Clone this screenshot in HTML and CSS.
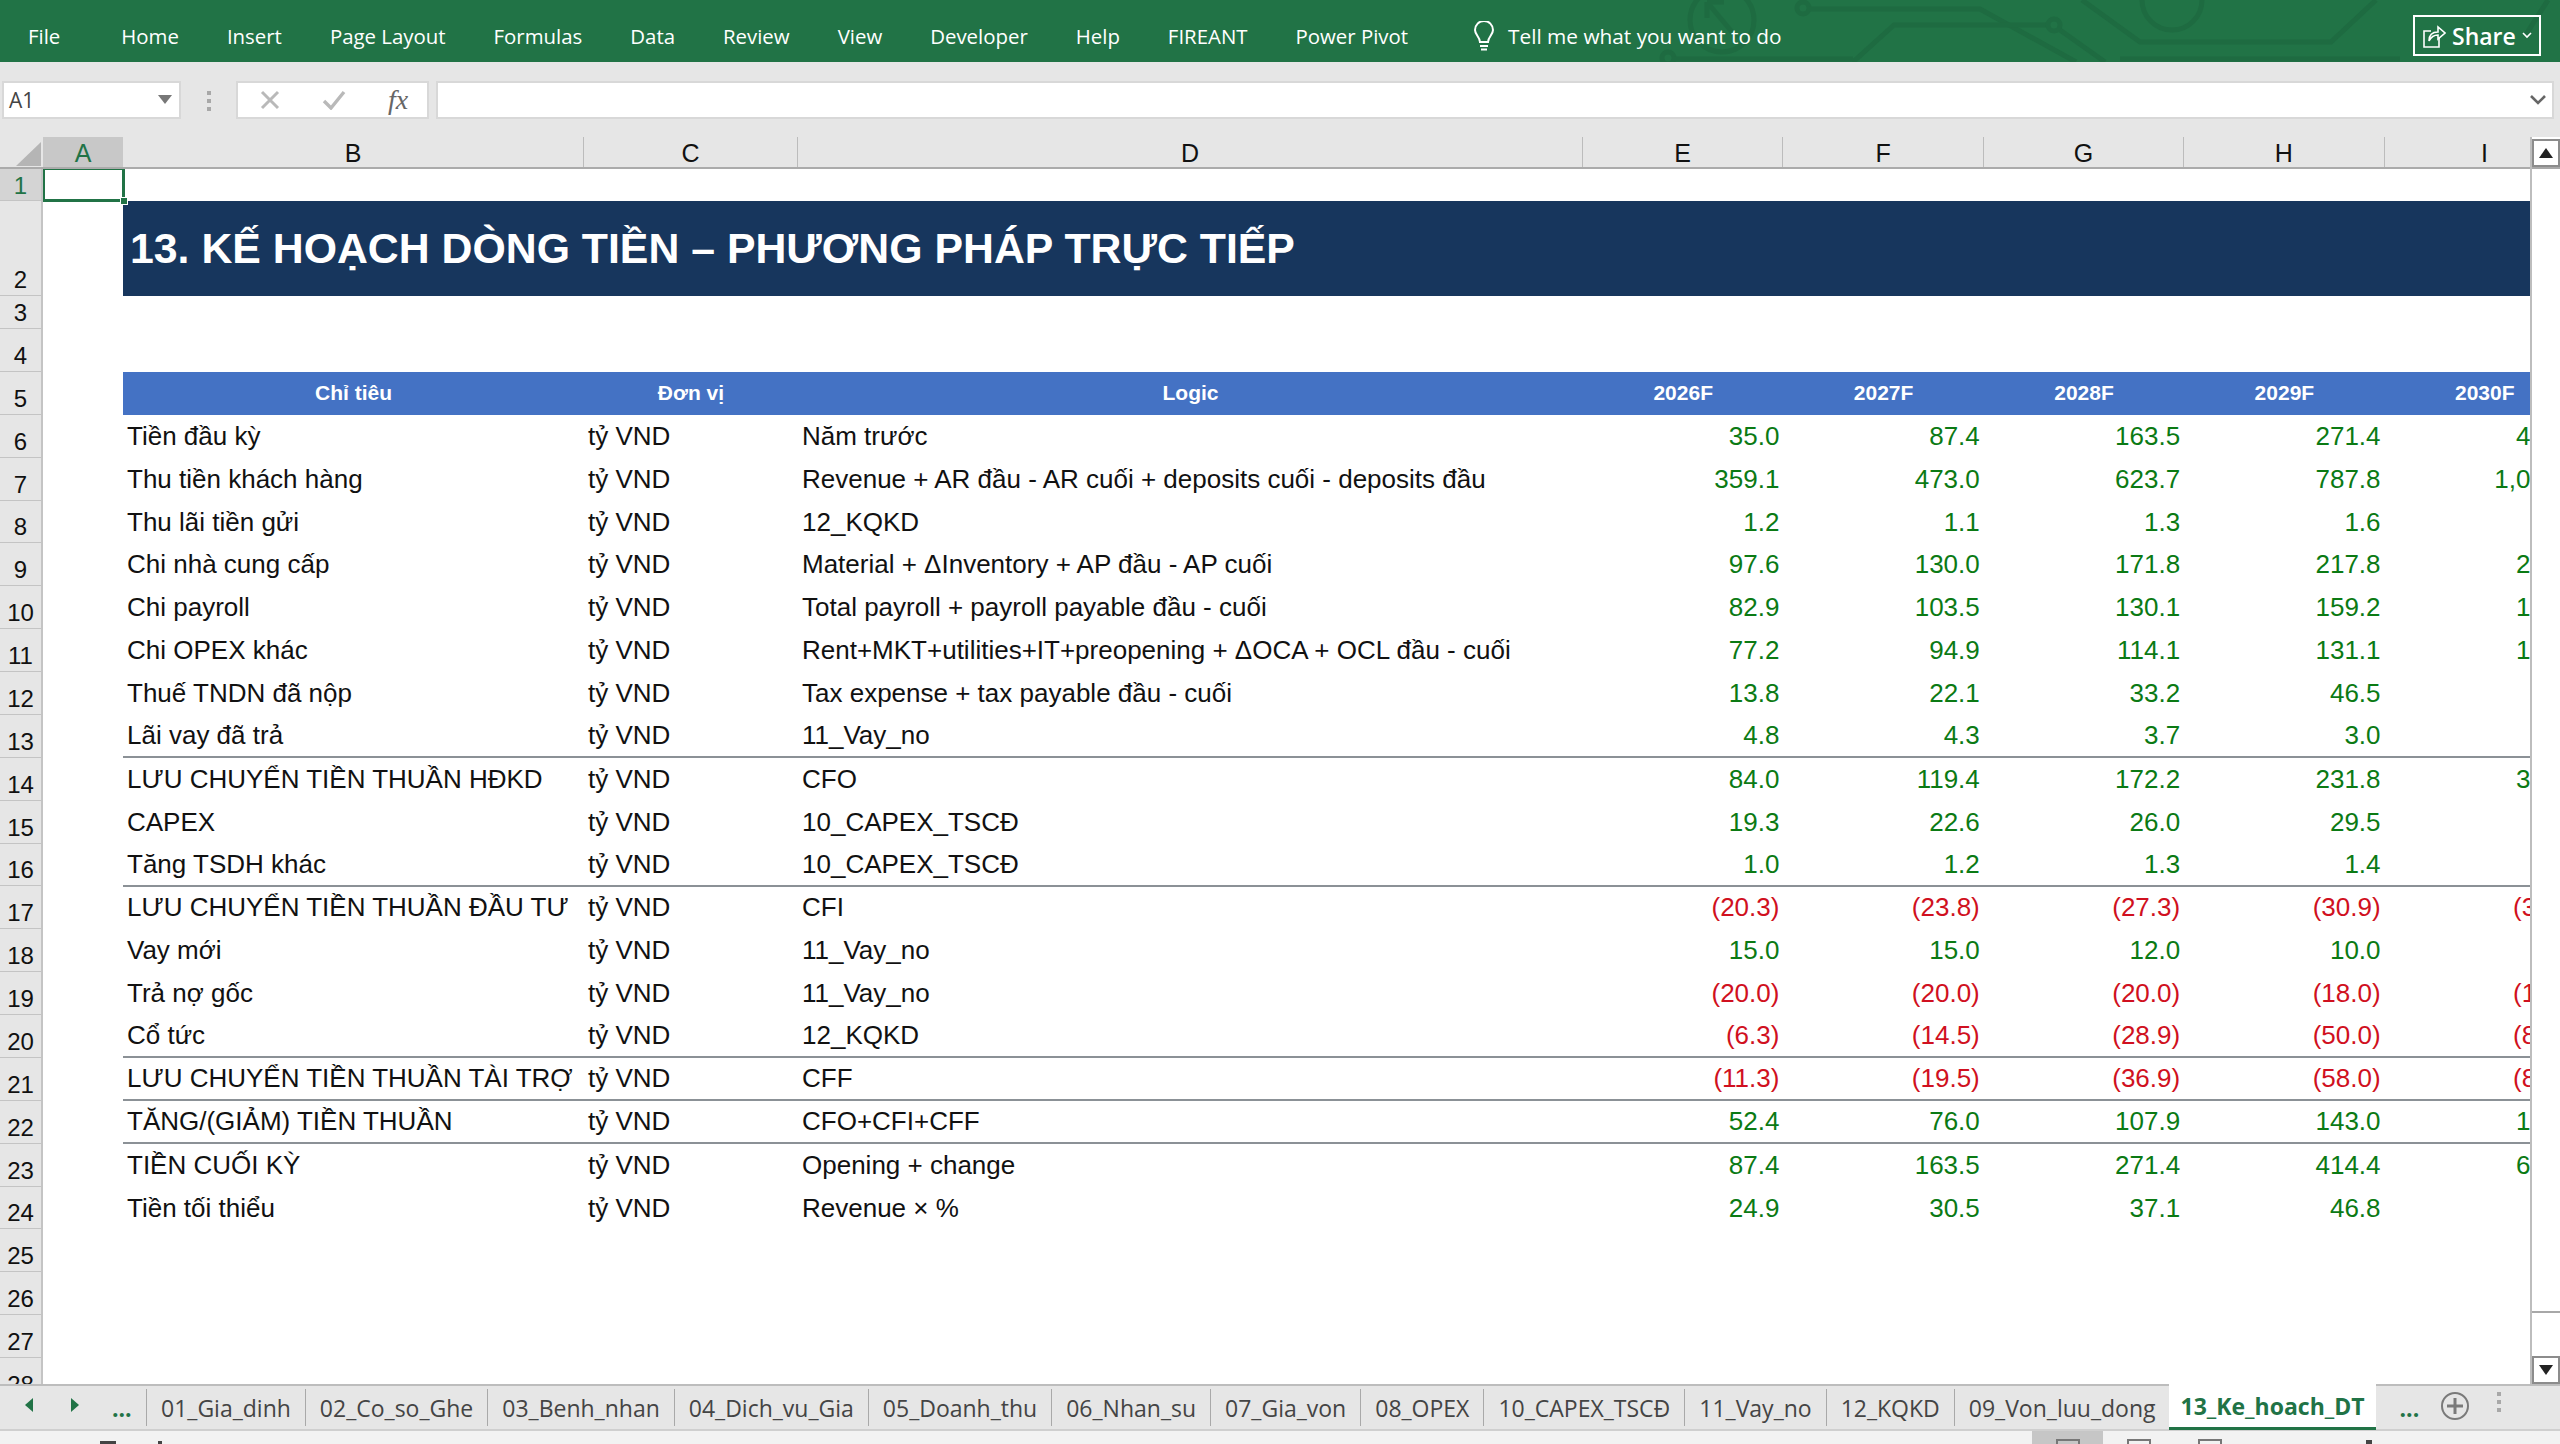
FILE: index.html
```html
<!DOCTYPE html>
<html lang="vi">

<head>
  <meta charset="UTF-8">
  <title>13_Ke_hoach_DT</title>
  <link rel="stylesheet" href="styles.css">
</head>

<body>

  <!-- ribbon -->
  <div class="ribbon">
    <svg class="circuit" width="2560" height="62" viewBox="0 0 2560 62" fill="none">
      <circle cx="1722" cy="20" r="32" />
      <path d="M1707 2 L1737 38 M1707 2 L1707 18 M1707 2 L1724 2" />
      <circle cx="1803" cy="8" r="6" />
      <path d="M1809 9 H1980 L2076 62" />
      <path d="M1853 62 L1894 25 H2048" />
      <circle cx="2054" cy="25" r="6" />
      <path d="M2060 30 L2105 62" />
      <circle cx="1668" cy="58" r="6" />
      <path d="M1674 59 H1853" />
      <path d="M2082 0 L2140 42 H2331 L2376 0" />
      <circle cx="2172" cy="0" r="30" />
      <path d="M2120 59 H2400" />
      <path d="M2548 0 L2525 36" />
    </svg>
    <span class="menu first">File</span>
    <span class="menu home">Home</span>
    <span class="menu">Insert</span>
    <span class="menu">Page Layout</span>
    <span class="menu">Formulas</span>
    <span class="menu">Data</span>
    <span class="menu">Review</span>
    <span class="menu">View</span>
    <span class="menu">Developer</span>
    <span class="menu">Help</span>
    <span class="menu">FIREANT</span>
    <span class="menu">Power Pivot</span>
    <svg class="bulb" width="24" height="30" viewBox="0 0 24 30" fill="none" stroke="#fff" stroke-width="2">
      <path d="M8 21 C8 16 3 14 3 9 A9 9 0 0 1 21 9 C21 14 16 16 16 21 Z" />
      <path d="M8 25 H16 M9 28.5 H15" />
    </svg>
    <span class="tell">Tell me what you want to do</span>
    <div class="share">
      <svg width="24" height="26" viewBox="0 0 24 26" fill="none" stroke="#fff" stroke-width="1.6">
        <path d="M9 8 H2 V24 H17 V15" />
        <path d="M7 18 C7 11 11 9 16 9 V4 L23 10 L16 16 V12 C12 12 9 14 7 18 Z" />
      </svg>
      <span class="share-text">Share</span>
      <svg width="10" height="7" viewBox="0 0 10 7" fill="none" stroke="#fff" stroke-width="1.6"><path d="M1 1 L5 5 L9 1" /></svg>
    </div>
  </div>

  <!-- name box + formula bar -->
  <div class="formula-bar">
    <div class="name-box">
      <span>A1</span>
      <i class="caret"></i>
    </div>
    <div class="grip"><b></b><b></b><b></b></div>
    <div class="fx-box">
      <svg width="20" height="20" viewBox="0 0 20 20" fill="none" stroke="#b9b9b9" stroke-width="3"><path d="M2 2 L18 18 M18 2 L2 18" /></svg>
      <svg width="24" height="20" viewBox="0 0 24 20" fill="none" stroke="#b9b9b9" stroke-width="3.4"><path d="M2 11 L9 18 L22 2" /></svg>
      <span class="fx">fx</span>
    </div>
    <div class="formula-input">
      <svg width="16" height="10" viewBox="0 0 16 10" fill="none" stroke="#666" stroke-width="2.6"><path d="M1 1 L8 8 L15 1" /></svg>
    </div>
  </div>

  <div class="workspace">
    <div class="sheet">

      <!-- column letters -->
      <div class="col-heads">
        <div class="corner"><i></i></div>
        <div class="col-head a">A</div>
        <div class="col-head b">B</div>
        <div class="col-head c">C</div>
        <div class="col-head d">D</div>
        <div class="col-head y">E</div>
        <div class="col-head y">F</div>
        <div class="col-head y">G</div>
        <div class="col-head y">H</div>
        <div class="col-head i">I</div>
      </div>

      <div class="sheet-body">
        <div class="row-heads">
          <div class="rh r1 on">1</div>
          <div class="rh r2">2</div>
          <div class="rh r3">3</div>
          <div class="rh">4</div>
          <div class="rh">5</div>
          <div class="rh">6</div>
          <div class="rh">7</div>
          <div class="rh">8</div>
          <div class="rh">9</div>
          <div class="rh">10</div>
          <div class="rh">11</div>
          <div class="rh">12</div>
          <div class="rh">13</div>
          <div class="rh">14</div>
          <div class="rh">15</div>
          <div class="rh">16</div>
          <div class="rh">17</div>
          <div class="rh">18</div>
          <div class="rh">19</div>
          <div class="rh">20</div>
          <div class="rh">21</div>
          <div class="rh">22</div>
          <div class="rh">23</div>
          <div class="rh">24</div>
          <div class="rh">25</div>
          <div class="rh">26</div>
          <div class="rh">27</div>
          <div class="rh">28</div>
        </div>

        <div class="cells">
          <div class="selection"><i></i></div>
          <div class="blank-1"></div>
          <div class="title">13. KẾ HOẠCH DÒNG TIỀN – PHƯƠNG PHÁP TRỰC TIẾP</div>
          <div class="blank-3"></div>
          <div class="blank-4"></div>

          <div class="row head">
            <div>Chỉ tiêu</div><div>Đơn vị</div><div>Logic</div>
            <div>2026F</div><div>2027F</div><div>2028F</div><div>2029F</div><div>2030F</div>
          </div>

          <div class="row"><div>Tiền đầu kỳ</div><div>tỷ VND</div><div>Năm trước</div><div class="n">35.0</div><div class="n">87.4</div><div class="n">163.5</div><div class="n">271.4</div><div class="n">414.4</div></div>
          <div class="row"><div>Thu tiền khách hàng</div><div>tỷ VND</div><div>Revenue + AR đầu - AR cuối + deposits cuối - deposits đầu</div><div class="n">359.1</div><div class="n">473.0</div><div class="n">623.7</div><div class="n">787.8</div><div class="n">1,012.5</div></div>
          <div class="row"><div>Thu lãi tiền gửi</div><div>tỷ VND</div><div>12_KQKD</div><div class="n">1.2</div><div class="n">1.1</div><div class="n">1.3</div><div class="n">1.6</div><div class="n">2.0</div></div>
          <div class="row"><div>Chi nhà cung cấp</div><div>tỷ VND</div><div>Material + ΔInventory + AP đầu - AP cuối</div><div class="n">97.6</div><div class="n">130.0</div><div class="n">171.8</div><div class="n">217.8</div><div class="n">280.4</div></div>
          <div class="row"><div>Chi payroll</div><div>tỷ VND</div><div>Total payroll + payroll payable đầu - cuối</div><div class="n">82.9</div><div class="n">103.5</div><div class="n">130.1</div><div class="n">159.2</div><div class="n">192.6</div></div>
          <div class="row"><div>Chi OPEX khác</div><div>tỷ VND</div><div>Rent+MKT+utilities+IT+preopening + ΔOCA + OCL đầu - cuối</div><div class="n">77.2</div><div class="n">94.9</div><div class="n">114.1</div><div class="n">131.1</div><div class="n">150.8</div></div>
          <div class="row"><div>Thuế TNDN đã nộp</div><div>tỷ VND</div><div>Tax expense + tax payable đầu - cuối</div><div class="n">13.8</div><div class="n">22.1</div><div class="n">33.2</div><div class="n">46.5</div><div class="n">63.2</div></div>
          <div class="row rule"><div>Lãi vay đã trả</div><div>tỷ VND</div><div>11_Vay_no</div><div class="n">4.8</div><div class="n">4.3</div><div class="n">3.7</div><div class="n">3.0</div><div class="n">2.3</div></div>
          <div class="row"><div>LƯU CHUYỂN TIỀN THUẦN HĐKD</div><div>tỷ VND</div><div>CFO</div><div class="n">84.0</div><div class="n">119.4</div><div class="n">172.2</div><div class="n">231.8</div><div class="n">325.6</div></div>
          <div class="row"><div>CAPEX</div><div>tỷ VND</div><div>10_CAPEX_TSCĐ</div><div class="n">19.3</div><div class="n">22.6</div><div class="n">26.0</div><div class="n">29.5</div><div class="n">33.4</div></div>
          <div class="row rule"><div>Tăng TSDH khác</div><div>tỷ VND</div><div>10_CAPEX_TSCĐ</div><div class="n">1.0</div><div class="n">1.2</div><div class="n">1.3</div><div class="n">1.4</div><div class="n">1.6</div></div>
          <div class="row"><div>LƯU CHUYỂN TIỀN THUẦN ĐẦU TƯ</div><div>tỷ VND</div><div>CFI</div><div class="n neg">(20.3)</div><div class="n neg">(23.8)</div><div class="n neg">(27.3)</div><div class="n neg">(30.9)</div><div class="n neg">(35.0)</div></div>
          <div class="row"><div>Vay mới</div><div>tỷ VND</div><div>11_Vay_no</div><div class="n">15.0</div><div class="n">15.0</div><div class="n">12.0</div><div class="n">10.0</div><div class="n">8.0</div></div>
          <div class="row"><div>Trả nợ gốc</div><div>tỷ VND</div><div>11_Vay_no</div><div class="n neg">(20.0)</div><div class="n neg">(20.0)</div><div class="n neg">(20.0)</div><div class="n neg">(18.0)</div><div class="n neg">(15.0)</div></div>
          <div class="row rule"><div>Cổ tức</div><div>tỷ VND</div><div>12_KQKD</div><div class="n neg">(6.3)</div><div class="n neg">(14.5)</div><div class="n neg">(28.9)</div><div class="n neg">(50.0)</div><div class="n neg">(80.0)</div></div>
          <div class="row rule"><div>LƯU CHUYỂN TIỀN THUẦN TÀI TRỢ</div><div>tỷ VND</div><div>CFF</div><div class="n neg">(11.3)</div><div class="n neg">(19.5)</div><div class="n neg">(36.9)</div><div class="n neg">(58.0)</div><div class="n neg">(87.0)</div></div>
          <div class="row rule"><div>TĂNG/(GIẢM) TIỀN THUẦN</div><div>tỷ VND</div><div>CFO+CFI+CFF</div><div class="n">52.4</div><div class="n">76.0</div><div class="n">107.9</div><div class="n">143.0</div><div class="n">193.6</div></div>
          <div class="row"><div>TIỀN CUỐI KỲ</div><div>tỷ VND</div><div>Opening + change</div><div class="n">87.4</div><div class="n">163.5</div><div class="n">271.4</div><div class="n">414.4</div><div class="n">608.0</div></div>
          <div class="row"><div>Tiền tối thiểu</div><div>tỷ VND</div><div>Revenue × %</div><div class="n">24.9</div><div class="n">30.5</div><div class="n">37.1</div><div class="n">46.8</div><div class="n">59.4</div></div>
        </div>
      </div>
    </div>

    <!-- vertical scrollbar -->
    <div class="scrollbar">
      <div class="sb-btn"><i class="up"></i></div>
      <div class="sb-thumb"></div>
      <div class="sb-btn"><i class="down"></i></div>
    </div>
  </div>

  <!-- sheet tabs -->
  <div class="tabs">
    <div class="tab-nav">
      <i class="arrow left"></i>
      <i class="arrow right"></i>
      <span class="more">...</span>
    </div>
    <div class="tab">01_Gia_dinh</div>
    <div class="tab">02_Co_so_Ghe</div>
    <div class="tab">03_Benh_nhan</div>
    <div class="tab">04_Dich_vu_Gia</div>
    <div class="tab">05_Doanh_thu</div>
    <div class="tab">06_Nhan_su</div>
    <div class="tab">07_Gia_von</div>
    <div class="tab">08_OPEX</div>
    <div class="tab">10_CAPEX_TSCĐ</div>
    <div class="tab">11_Vay_no</div>
    <div class="tab">12_KQKD</div>
    <div class="tab">09_Von_luu_dong</div>
    <div class="tab active">13_Ke_hoach_DT</div>
    <span class="more after">...</span>
    <svg class="add" width="30" height="30" viewBox="0 0 30 30" fill="none" stroke="#7a7a7a">
      <circle cx="15" cy="15" r="13" stroke-width="2" />
      <path d="M15 7 V23 M7 15 H23" stroke-width="3" />
    </svg>
    <div class="grip tab-grip"><b></b><b></b><b></b></div>
  </div>

  <!-- status bar, cut off by the bottom of the window -->
  <div class="status">
    <i class="st-icon macro"></i>
    <i class="st-icon rec"></i>
    <div class="views">
      <div class="view on"><i></i></div>
      <div class="view"><i></i></div>
      <div class="view"><i></i></div>
    </div>
    <i class="zoom-tick"></i>
  </div>

</body>

</html>
```

FILE: styles.css
```css
* {
  box-sizing: border-box;
}

html,
body {
  height: 100%;
}

body {
  margin: 0;
  height: 1444px;
  overflow: hidden;
  display: flex;
  flex-direction: column;
  background: #e6e6e6;
  font-family: "Liberation Sans", Arial, sans-serif;
  color: #111;
}

/* ribbon */
.ribbon {
  position: relative;
  height: 62px;
  flex: none;
  display: flex;
  align-items: center;
  gap: 48px;
  padding: 9px 0 0 28px;
  background: #217346;
  color: #fff;
  font-family: "Open Sans", "Noto Sans", sans-serif;
  font-size: 20.4px;
  overflow: hidden;
}

.circuit {
  position: absolute;
  top: 0;
  left: 0;
}

.circuit * {
  stroke: #1e6b41;
  stroke-width: 5;
}

.menu,
.tell,
.bulb {
  position: relative;
}

.tell {
  font-size: 20.8px;
}

.menu.home {
  margin-left: 13px;
}

.bulb {
  margin-left: 16px;
  margin-right: -36px;
}

.share {
  position: absolute;
  top: 15px;
  left: 2413px;
  width: 128px;
  height: 41px;
  display: flex;
  align-items: center;
  gap: 6px;
  padding-left: 7px;
  border: 2px solid #fff;
}

.share-text {
  font-size: 23px;
  font-weight: 600;
}

/* formula bar */
.formula-bar {
  height: 75px;
  flex: none;
  display: flex;
  align-items: flex-start;
  padding: 19px 6px 0 2px;
  background: #e6e6e6;
}

.name-box,
.fx-box,
.formula-input {
  height: 38px;
  display: flex;
  align-items: center;
  background: #fff;
  border: 2px solid #d8d8d8;
}

.name-box {
  width: 179px;
  justify-content: space-between;
  padding: 0 7px 0 5px;
  font-family: "Open Sans", "Noto Sans", sans-serif;
  font-size: 21px;
  color: #444;
}

.caret {
  width: 0;
  height: 0;
  margin-top: -2px;
  border-left: 7px solid transparent;
  border-right: 7px solid transparent;
  border-top: 9px solid #777;
}

.grip {
  width: 55px;
  display: flex;
  flex-direction: column;
  align-items: center;
  gap: 4px;
  padding-top: 10px;
}

.grip b {
  width: 4px;
  height: 4px;
  background: #a8a8a8;
}

.fx-box {
  width: 193px;
  gap: 42px;
  padding-left: 22px;
}

.fx {
  font-family: "Liberation Serif", serif;
  font-style: italic;
  font-size: 28px;
  color: #666;
}

.formula-input {
  flex: 1;
  margin-left: 7px;
  justify-content: flex-end;
  padding-right: 6px;
}

/* grid */
.workspace {
  flex: none;
  height: 1247px;
  display: flex;
  overflow: hidden;
}

.sheet {
  width: 2530px;
  flex: none;
  overflow: hidden;
}

.col-heads {
  width: 2800px;
  height: 32px;
  display: flex;
  align-items: stretch;
  border-bottom: 2px solid #ababab;
  font-size: 25px;
  line-height: 33px;
  text-align: center;
}

.corner {
  position: relative;
  width: 43px;
  flex: none;
}

.corner i {
  position: absolute;
  top: 5px;
  left: 16px;
  width: 25px;
  height: 24px;
  background: #b5b5b5;
  clip-path: polygon(100% 0, 100% 100%, 0 100%);
}

.col-head {
  flex: none;
  border-right: 1px solid #bcbcbc;
  color: #111;
}

.col-head.a {
  width: 80px;
  background: #c8c8c8;
  color: #217346;
  border-right: none;
}

.col-head.b {
  width: 461px;
}

.col-head.c {
  width: 214px;
}

.col-head.d {
  width: 785px;
}

.col-head.y {
  width: 200.4px;
}

.col-head.i {
  width: 200px;
  border-right: none;
}

.sheet-body {
  display: flex;
  height: 1215px;
}

.row-heads {
  width: 43px;
  flex: none;
  font-size: 24px;
  text-align: center;
  border-right: 2px solid #c4c4c4;
}

.rh {
  height: 42.88px;
  display: flex;
  align-items: flex-end;
  justify-content: center;
  padding-bottom: 1px;
  border-bottom: 1.5px solid #c4c4c4;
  color: #111;
}

.rh.r1 {
  height: 32px;
  background: #d4d4d4;
  color: #217346;
  padding-bottom: 0;
}

.rh.r2 {
  height: 95px;
}

.rh.r3 {
  height: 33px;
}

.cells {
  position: relative;
  flex: 1;
  min-width: 0;
  background: #fff;
  padding-left: 80px;
  font-size: 26px;
  overflow: hidden;
}

.selection {
  position: absolute;
  top: -2px;
  left: -1px;
  width: 83px;
  height: 35px;
  border: 3px solid #217346;
}

.selection i {
  position: absolute;
  right: -6px;
  bottom: -6px;
  width: 8px;
  height: 8px;
  background: #217346;
  border: 1px solid #fff;
}

.blank-1 {
  height: 32px;
}

.title {
  height: 95px;
  display: flex;
  align-items: center;
  padding: 0 0 0 7px;
  background: #17365d;
  color: #fff;
  font-size: 42.8px;
  font-weight: bold;
  white-space: nowrap;
}

.blank-3 {
  height: 33px;
}

.blank-4 {
  height: 43px;
}

.row {
  height: 42.88px;
  display: grid;
  grid-template-columns: 461px 214px 785px repeat(5, 200.4px);
  align-items: center;
  white-space: nowrap;
}

.row > div {
  padding: 0 4px;
  overflow: hidden;
}

.row.rule {
  border-bottom: 2px solid #8b9196;
}

.row.head {
  background: #4472c4;
  color: #fff;
  font-size: 21px;
  font-weight: bold;
  text-align: center;
}

.row .n {
  text-align: right;
  color: #0b7a14;
}

.row .neg {
  color: #d01020;
}

/* scrollbar */
.scrollbar {
  width: 30px;
  flex: none;
  display: flex;
  flex-direction: column;
  padding-top: 2px;
  border-left: 2px solid #bdbdbd;
  background: #fff;
}

.sb-btn {
  height: 28px;
  flex: none;
  display: flex;
  align-items: center;
  justify-content: center;
  background: #fff;
  border: 2px solid #8c8c8c;
}

.sb-btn i {
  width: 0;
  height: 0;
  border-left: 7px solid transparent;
  border-right: 7px solid transparent;
}

.sb-btn .up {
  border-bottom: 10px solid #222;
}

.sb-btn .down {
  border-top: 10px solid #222;
}

.sb-thumb {
  flex: 1;
  border-bottom: 2px solid #a8a8a8;
  margin-bottom: 43px;
  border-top: 2px solid #a8a8a8;
}

/* sheet tabs */
.tabs {
  height: 47px;
  flex: none;
  display: flex;
  align-items: stretch;
  background: #e6e6e6;
  border-top: 2px solid #bdbdbd;
  border-bottom: 2px solid #cfcfcf;
  font-family: "Open Sans", "Noto Sans", sans-serif;
  font-size: 23px;
  color: #444;
}

.tab-nav {
  width: 146px;
  flex: none;
  display: flex;
  align-items: center;
  padding-left: 25px;
}

.arrow {
  width: 0;
  height: 0;
  border-top: 7px solid transparent;
  border-bottom: 7px solid transparent;
  margin-top: -6px;
}

.arrow.left {
  border-right: 8px solid #217346;
}

.arrow.right {
  margin-left: 38px;
  border-left: 8px solid #217346;
}

.more {
  color: #217346;
  font-weight: bold;
  margin-left: 33px;
}

.more.after {
  align-self: center;
  margin-left: 23px;
}

.tab {
  display: flex;
  flex: none;
  align-items: center;
  padding: 0 14px 0 14px;
  margin: 3px 0;
  border-left: 1px solid #a9a9a9;
  white-space: nowrap;
}

.tab.active {
  margin: -2px 0 0;
  height: 46px;
  padding: 0 11px;
  background: #fff;
  color: #217346;
  font-weight: bold;
  border-left: none;
  border-bottom: 3px solid #217346;
}

.tab.active + .more {
  margin-left: 24px;
}

.add {
  align-self: center;
  margin: -4px 0 0 21px;
}

.tab-grip {
  width: 4px;
  margin-left: 27px;
  padding-top: 6px;
}

/* status bar */
.status {
  position: relative;
  flex: 1;
  background: #f2f2f2;
  overflow: hidden;
}

.st-icon,
.view i,
.zoom-tick,
.views {
  position: absolute;
}

.st-icon {
  top: 10px;
  background: #444;
}

.st-icon.macro {
  left: 100px;
  width: 16px;
  height: 4px;
}

.st-icon.rec {
  left: 158px;
  width: 4px;
  height: 4px;
}

.views {
  top: 0;
  left: 2032px;
  display: flex;
}

.view {
  position: relative;
  width: 71px;
  height: 13px;
}

.view.on {
  background: #c6c6c6;
}

.view i {
  top: 8px;
  left: 24px;
  width: 24px;
  height: 8px;
  border: 2px solid #777;
}

.zoom-tick {
  top: 9px;
  left: 2366px;
  width: 6px;
  height: 5px;
  background: #444;
}
```
